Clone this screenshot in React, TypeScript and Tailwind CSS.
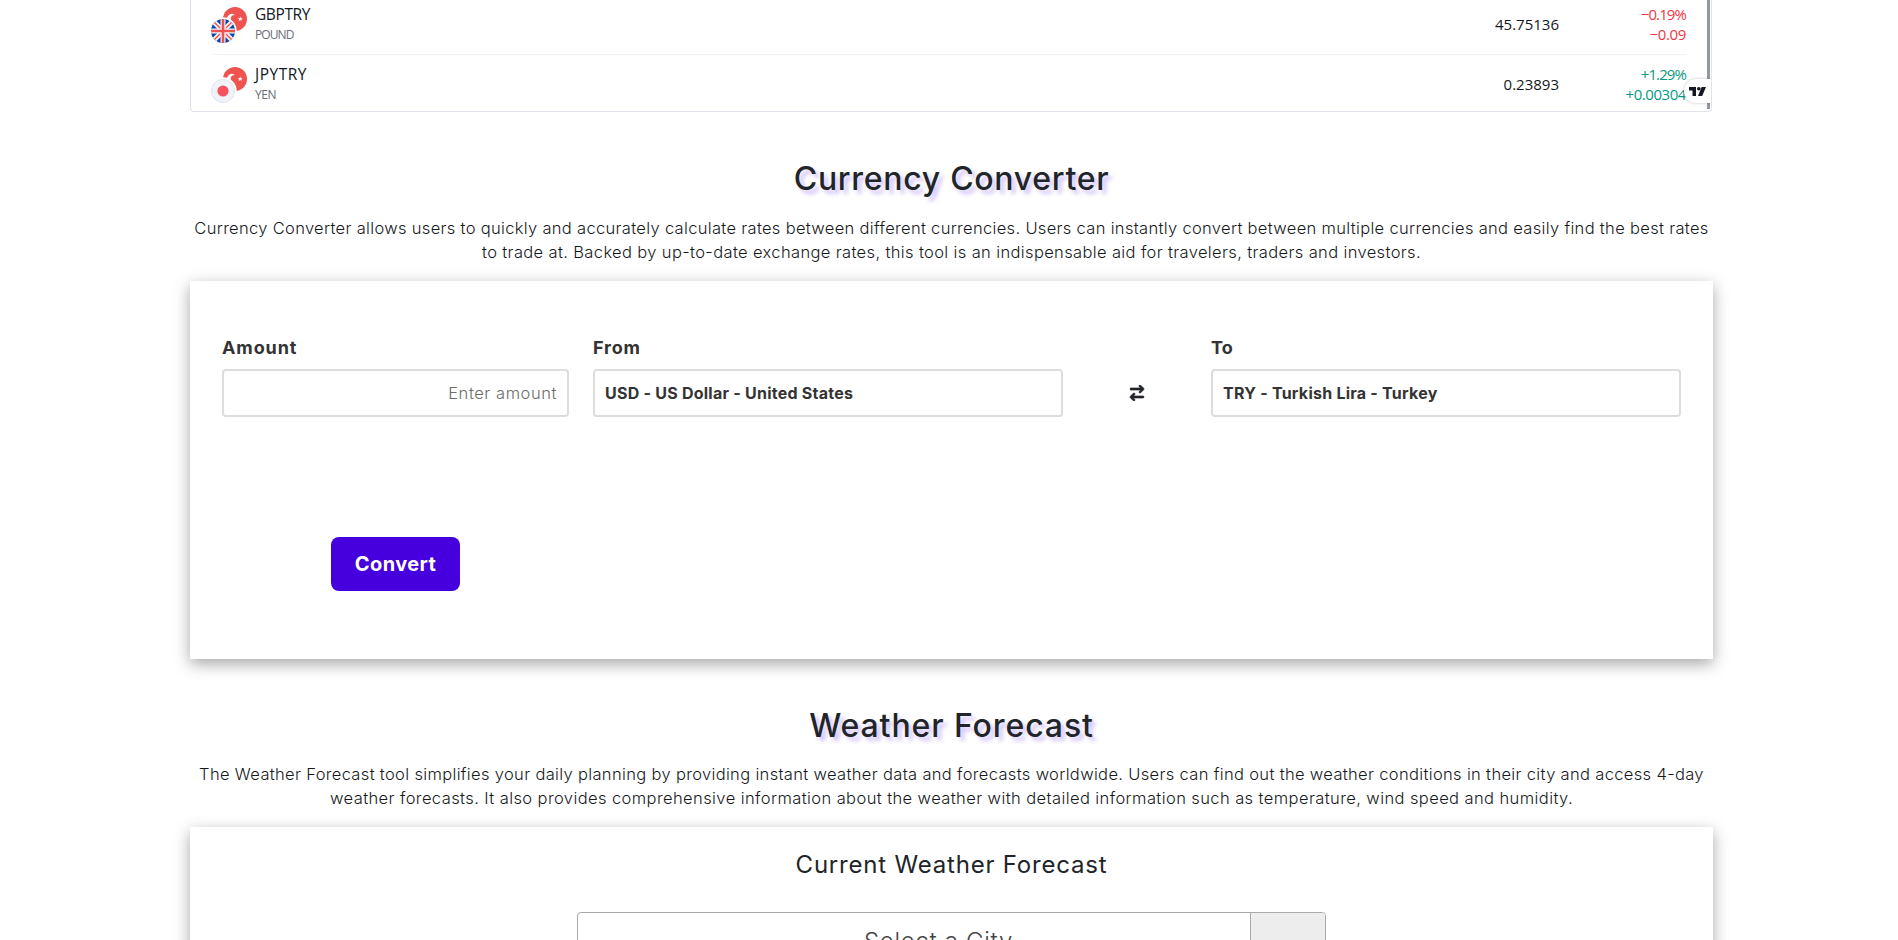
import type { ReactNode } from "react";
import { FaArrowRightArrowLeft } from "react-icons/fa6";

function TurkeyFlag() {
  return (
    <g>
      <circle cx="24" cy="12" r="12" fill="#ef5350" />
      <path
        d="M24.4 16.1a5 5 0 1 1 0-8.2 4.1 4.1 0 1 0 0 8.2Z"
        fill="#fff"
        transform="translate(-0.6 0)"
      />
      <path
        d="m29.2 9.6.7 1.6 1.8.1-1.4 1.1.5 1.7-1.6-1-1.5 1 .4-1.7-1.4-1.1 1.8-.1Z"
        fill="#fff"
      />
      <circle cx="12" cy="24" r="13.7" fill="#fff" />
    </g>
  );
}

function PoundIcon() {
  return (
    <svg width="36" height="36" viewBox="0 0 36 36" className="mt-0.5 shrink-0">
      <defs>
        <clipPath id="uk">
          <circle cx="12" cy="24" r="12" />
        </clipPath>
      </defs>
      <TurkeyFlag />
      <g clipPath="url(#uk)">
        <rect x="0" y="12" width="24" height="24" fill="#0d47a1" />
        <path d="m0 12 24 24M24 12 0 36" stroke="#f0f3fa" strokeWidth="5" />
        <path d="m0 12 24 24M24 12 0 36" stroke="#ef5350" strokeWidth="1.4" />
        <path d="M12 12v24M0 24h24" stroke="#f0f3fa" strokeWidth="5" />
        <path d="M12 12v24M0 24h24" stroke="#ef5350" strokeWidth="2.6" />
      </g>
    </svg>
  );
}

function YenIcon() {
  return (
    <svg width="36" height="36" viewBox="0 0 36 36" className="mt-0.5 shrink-0">
      <TurkeyFlag />
      <circle cx="12" cy="24" r="11.5" fill="#f0f3fa" stroke="#e0e3eb" />
      <circle cx="12" cy="24" r="5.6" fill="#f7525f" />
    </svg>
  );
}

type RowProps = {
  icon: ReactNode;
  name: ReactNode;
  sub: ReactNode;
  price: string;
  percent: string;
  change: ReactNode;
  tone: string;
};

function QuoteRow({ icon, name, sub, price, percent, change, tone }: RowProps) {
  return (
    <div className="flex h-[60px] shrink-0 items-start border-b border-[#f0f3fa] pt-[9px]">
      <div className="flex h-10 w-full items-center">
        {icon}
        <div className="ml-2 flex-1">
          <div className="text-[15.5px] leading-5 text-[#131722]">{name}</div>
          <div className="text-xs leading-[21px] text-[#6a6d78]">{sub}</div>
        </div>
        <div className="text-[15px] leading-5 text-[#131722]">{price}</div>
        <div className={`w-[127px] text-right text-[15px] leading-5 ${tone}`}>
          <div className="tracking-[-0.9px]">{percent}</div>
          <div>{change}</div>
        </div>
      </div>
    </div>
  );
}

function Ticker() {
  return (
    <div className="relative flex h-28 w-[1522px] flex-col overflow-hidden rounded-b border border-t-0 border-[#e0e3eb] pr-[25px] pl-5 font-['Open_Sans',sans-serif]">
      <div className="-mt-[5px]">
        <QuoteRow
          icon={<PoundIcon />}
          name={<span className="tracking-[-0.4px]">GBPTRY</span>}
          sub={<span className="tracking-[-0.9px]">POUND</span>}
          price="45.75136"
          percent="−0.19%"
          change={<span className="tracking-[-0.35px]">−0.09</span>}
          tone="text-[#f23645]"
        />
        <QuoteRow
          icon={<YenIcon />}
          name={<span className="tracking-[0.5px]">JPYTRY</span>}
          sub={<span className="tracking-[-0.4px]">YEN</span>}
          price="0.23893"
          percent="+1.29%"
          change={<span className="tracking-[-0.45px]">+0.00304</span>}
          tone="text-[#089981]"
        />
      </div>
      <div className="absolute top-0 right-[1px] h-[109px] w-[3px] bg-[#9598a1]" />
      <div className="absolute top-[79px] right-0 flex h-6 w-[27px] items-center rounded-l-full bg-white pl-[5px] shadow-[0_0_3px_rgba(0,0,0,0.25)]">
        <svg width="17" height="9" viewBox="0 0 17 9" fill="#131722">
          <path d="M0 0h7v9H3.5V3.5H0ZM12.6 0H17l-3.8 9H9Z" />
          <circle cx="9.8" cy="1.8" r="1.8" />
        </svg>
      </div>
    </div>
  );
}

function SectionTitle({ children }: { children: ReactNode }) {
  return (
    <h2 className="text-center text-[32px] leading-10 font-medium whitespace-nowrap text-[#212529] [text-shadow:4px_4px_4px_rgba(69,0,221,0.25)]">
      {children}
    </h2>
  );
}

function Card({ className, children }: { className: string; children: ReactNode }) {
  return (
    <div className={`mt-[17px] bg-white shadow-[0_5px_15px_rgba(0,0,0,0.35)] ${className}`}>
      {children}
    </div>
  );
}

function Field({ label, className, children }: { label: ReactNode; className: string; children: ReactNode }) {
  return (
    <div className={className}>
      <div className="mb-[7px] text-lg leading-7 font-bold text-[#333]">{label}</div>
      {children}
    </div>
  );
}

export default function App() {
  return (
    <div className="h-[940px] overflow-hidden bg-white pl-[190px] font-['Inter',sans-serif] text-[#212529]">
      <main className="w-[1523px]">
        <Ticker />

        <section className="mt-[47px]">
          <SectionTitle>
            <span className="tracking-[0.7px]">Currency Converter</span>
          </SectionTitle>
          <p className="mt-[17px] text-center text-[16.5px] leading-6 font-light whitespace-nowrap text-[#16191c]">
            <span className="block tracking-[0.32px]">
              Currency Converter allows users to quickly and accurately calculate rates between different currencies. Users can instantly convert between multiple currencies and easily find the best rates
            </span>
            <span className="block tracking-[0.365px]">
              to trade at. Backed by up-to-date exchange rates, this tool is an indispensable aid for travelers, traders and investors.
            </span>
          </p>
          <Card className="h-[378px] px-8 pt-[53px]">
            <div className="flex items-end">
              <Field className="w-[347px]" label={<span className="tracking-[0.9px]">Amount</span>}>
                <div className="flex h-12 items-center justify-end rounded border-2 border-[#ddd] px-2.5 text-[16.5px] font-light tracking-[0.56px] text-[#6c6c6c]">
                  Enter amount
                </div>
              </Field>
              <Field className="ml-6 w-[470px]" label={<span className="tracking-[0.8px]">From</span>}>
                <div className="flex h-12 items-center rounded border-2 border-[#ddd] px-2.5 text-base font-bold tracking-[0.24px] text-[#333]">
                  USD - US Dollar - United States
                </div>
              </Field>
              <div className="flex h-12 w-[148px] items-center justify-center">
                <FaArrowRightArrowLeft className="size-4 stroke-current stroke-[22]" />
              </div>
              <Field className="w-[470px]" label={<span className="tracking-[0.2px]">To</span>}>
                <div className="flex h-12 items-center rounded border-2 border-[#ddd] px-2.5 text-base font-bold tracking-[0.24px] text-[#333]">
                  TRY - Turkish Lira - Turkey
                </div>
              </Field>
            </div>
            <div className="mt-[120px] flex w-[347px] justify-center">
              <button className="h-[54px] w-[129px] rounded-lg bg-[#4500dd] text-xl font-bold tracking-[0.4px] text-white">
                Convert
              </button>
            </div>
          </Card>
        </section>

        <section className="mt-[47px]">
          <SectionTitle>
            <span className="tracking-[0.9px]">Weather Forecast</span>
          </SectionTitle>
          <p className="mt-4 text-center text-[16.5px] leading-6 font-light whitespace-nowrap text-[#16191c]">
            <span className="block tracking-[0.338px]">
              The Weather Forecast tool simplifies your daily planning by providing instant weather data and forecasts worldwide. Users can find out the weather conditions in their city and access 4-day
            </span>
            <span className="block tracking-[0.408px]">
              weather forecasts. It also provides comprehensive information about the weather with detailed information such as temperature, wind speed and humidity.
            </span>
          </p>
          <Card className="h-[300px] pt-[23px]">
            <h3 className="text-center text-2xl leading-[30px] font-normal tracking-[0.8px]">
              Current Weather Forecast
            </h3>
            <div className="mx-auto mt-8 flex h-[60px] w-[749px] overflow-hidden rounded border border-[#aaa]">
              <div className="flex-1 pl-[49px] text-center text-2xl leading-[58px] font-light tracking-[0.7px] text-[#444]">
                Select a City
              </div>
              <div className="w-[75px] border-l border-[#aaa] bg-[#ededed]" />
            </div>
          </Card>
        </section>
      </main>
    </div>
  );
}
